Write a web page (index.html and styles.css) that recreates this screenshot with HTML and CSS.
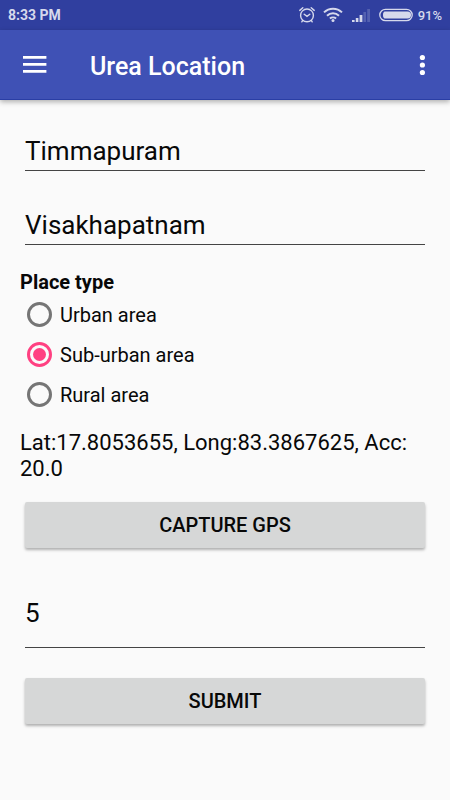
FILE: index.html
```html
<!DOCTYPE html>
<html lang="en">
<head>
<meta charset="utf-8">
<meta name="viewport" content="width=device-width, initial-scale=1">
<title>Urea Location</title>
<link rel="stylesheet" href="styles.css">
</head>
<body>
<div class="status-bar">
  <span>8:33 PM</span>
  <div class="status-icons">
    <svg width="16" height="16" viewBox="0 0 16 16" fill="none" stroke="currentColor" stroke-width="1.4" stroke-linecap="round" aria-hidden="true">
      <circle cx="8" cy="8.4" r="6.4"/>
      <path d="M5.2 7.2 8 9.4l2.8-2.2M.8 3.4 3.8.8M15.2 3.4 12.2.8M3.6 13.6l-.8 1.2M12.4 13.6l.8 1.2"/>
    </svg>
    <svg width="20" height="16" viewBox="0 0 20 16" fill="none" stroke="currentColor" stroke-width="2" aria-hidden="true">
      <path d="M1 5.4a13 13 0 0 1 18 0M4 8.7a8.7 8.7 0 0 1 12 0M6.9 11.6a4.6 4.6 0 0 1 6.2 0"/>
      <circle cx="10" cy="13.4" r="1.5" fill="currentColor" stroke="none"/>
    </svg>
    <svg width="20" height="16" viewBox="0 0 20 16" fill="currentColor" aria-hidden="true">
      <path d="M1 13h2.6v2H1zM4.8 11h2.6v4H4.8zM8.6 8h2.8v7H8.6z"/>
      <path d="M12.4 5H15v10h-2.6zM16.2 2H19v13h-2.8z" opacity=".22"/>
    </svg>
    <svg width="34" height="14" viewBox="0 0 34 14" aria-hidden="true">
      <rect x=".8" y="1.3" width="32.4" height="11.4" rx="5.7" fill="none" stroke="currentColor" stroke-width="1.3"/>
      <path d="M5.5 3.5h23a3.5 3.5 0 0 1 0 7h-23C4.2 9.6 4 8.4 4 7s.2-2.6 1.5-3.5z" fill="currentColor"/>
    </svg>
    <span class="battery-level">91%</span>
  </div>
</div>
<header class="app-bar">
  <button class="icon-button" type="button" aria-label="Open menu">
    <svg width="24" height="18" viewBox="0 0 24 18" fill="currentColor" aria-hidden="true">
      <path d="M0 0h23.4v2.7H0zM0 7h23.4v2.7H0zM0 14h23.4v2.7H0z"/>
    </svg>
  </button>
  <h1 class="title">Urea Location</h1>
  <button class="icon-button" type="button" aria-label="More options">
    <svg width="6" height="22" viewBox="0 0 6 22" fill="currentColor" aria-hidden="true">
      <circle cx="3.4" cy="3.5" r="2.6"/><circle cx="3.4" cy="11" r="2.6"/><circle cx="3.4" cy="18.5" r="2.6"/>
    </svg>
  </button>
</header>
<main>
  <form class="form">
    <input class="field" type="text" aria-label="Village" value="Timmapuram">
    <input class="field" type="text" aria-label="District" value="Visakhapatnam">
    <fieldset class="place-type">
      <legend>Place type</legend>
      <label class="option"><input type="radio" name="place">Urban area</label>
      <label class="option"><input type="radio" name="place" checked>Sub-urban area</label>
      <label class="option"><input type="radio" name="place">Rural area</label>
    </fieldset>
    <p class="position">Lat:17.8053655, Long:83.3867625, Acc: 20.0</p>
    <button class="action" type="button">CAPTURE GPS</button>
    <input class="field quantity" type="text" inputmode="numeric" aria-label="Quantity" value="5">
    <button class="action" type="submit">SUBMIT</button>
  </form>
</main>
</body>
</html>
```
FILE: styles.css
```css
* {
  box-sizing: border-box;
}

body {
  margin: 0;
  min-height: 100vh;
  background: #fafafa;
  color: #080808;
  font-family: Roboto, "Liberation Sans", sans-serif;
}

.status-bar {
  display: flex;
  align-items: center;
  justify-content: space-between;
  height: 30px;
  padding: 0 8px;
  background: #303f9f;
  color: #d6d9ec;
  font-size: 14px;
  font-weight: 700;
}

.status-icons {
  display: flex;
  align-items: center;
  gap: 8px;
}

.battery-level {
  font-size: 13px;
  font-weight: 500;
  margin-left: -3px;
}

.app-bar {
  display: flex;
  align-items: center;
  height: 70px;
  padding: 0 10px;
  background: #3f51b5;
  border-bottom: 1px solid #2a3ea5;
  box-shadow: 0 2px 5px rgba(0, 0, 0, 0.3);
  color: #fff;
}

.icon-button {
  display: flex;
  align-items: center;
  justify-content: center;
  width: 50px;
  height: 50px;
  padding: 0;
  border: 0;
  background: none;
  color: inherit;
}

.app-bar .icon-button:last-child {
  width: 36px;
}

.title {
  flex: 1;
  margin: 4px 0 0 30px;
  font-size: 25px;
  font-weight: 500;
}

.form {
  display: flex;
  flex-direction: column;
  padding: 31px 20px 20px;
}

.field {
  height: 40px;
  margin: 0 5px 34px;
  padding: 0;
  border: 0;
  border-bottom: 1px solid #444;
  border-radius: 0;
  outline: 0;
  background: none;
  color: inherit;
  font-family: inherit;
  font-size: 26px;
}

.place-type {
  margin: -8px 0 0;
  padding: 0;
  border: 0;
}

.place-type legend {
  padding: 0 0 2px;
  font-size: 20px;
  font-weight: 700;
  line-height: 22px;
}

.option {
  display: flex;
  align-items: center;
  gap: 8px;
  height: 40px;
  padding-left: 7px;
  font-size: 20px;
}

.option input {
  appearance: none;
  display: grid;
  place-content: center;
  width: 25px;
  height: 25px;
  margin: 0 0 2px;
  border: 3px solid #757575;
  border-radius: 50%;
}

.option input:checked {
  border-color: #ff4081;
}

.option input:checked::before {
  content: "";
  width: 13px;
  height: 13px;
  border-radius: 50%;
  background: #ff4081;
}

.position {
  margin: 15px 0 20px;
  font-size: 22px;
  line-height: 26px;
}

.action {
  height: 46px;
  margin: 0 5px;
  border: 0;
  border-radius: 2px;
  background: #d6d7d7;
  box-shadow: 0 2px 3px rgba(0, 0, 0, 0.3);
  color: #080808;
  font-family: inherit;
  font-size: 20px;
  font-weight: 500;
}

.quantity {
  height: 60px;
  margin-top: 40px;
  margin-bottom: 30px;
  padding-bottom: 10px;
}
```
